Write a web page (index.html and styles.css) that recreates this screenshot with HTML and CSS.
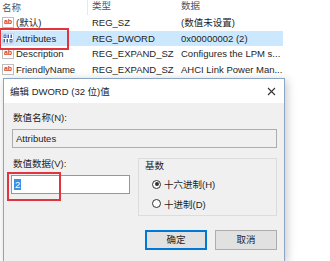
FILE: index.html
```html
<!DOCTYPE html>
<html>
<head>
    <meta charset="utf-8">
    <title>编辑 DWORD (32 位)值</title>
    <link rel="stylesheet" href="styles.css">
</head>
<body>
    <div class="list">
        <div class="row head">
            <span class="c1">名称</span>
            <span class="c2">类型</span>
            <span class="c3">数据</span>
        </div>
        <div class="row">
            <span class="c1"><i class="ico ab">ab</i>(默认)</span>
            <span class="c2">REG_SZ</span>
            <span class="c3">(数值未设置)</span>
        </div>
        <div class="row sel">
            <span class="c1 mark"><svg class="ico" width="12" height="11" viewBox="0 0 12 11"><rect x="0.5" y="0.5" width="11" height="10" fill="#fff" stroke="#b8c2d0" stroke-width="0.6"/><g fill="#3b62b8"><rect x="1.5" y="1.5" width="3" height="3.5"/><rect x="5.5" y="1.5" width="1.5" height="3.5"/><rect x="8.5" y="1.5" width="1.5" height="3.5"/><rect x="1.5" y="6" width="1.5" height="3.5"/><rect x="4.5" y="6" width="1.5" height="3.5"/><rect x="7.5" y="6" width="3" height="3.5"/></g><g fill="#fff"><rect x="2.5" y="2.5" width="1" height="1.5"/><rect x="8.5" y="7" width="1" height="1.5"/></g></svg>Attributes</span>
            <span class="c2">REG_DWORD</span>
            <span class="c3">0x00000002 (2)</span>
        </div>
        <div class="row">
            <span class="c1"><i class="ico ab">ab</i>Description</span>
            <span class="c2">REG_EXPAND_SZ</span>
            <span class="c3">Configures the LPM s...</span>
        </div>
        <div class="row">
            <span class="c1"><i class="ico ab">ab</i>FriendlyName</span>
            <span class="c2">REG_EXPAND_SZ</span>
            <span class="c3">AHCI Link Power Man...</span>
        </div>
    </div>

    <div class="dialog">
        <div class="title">
            <span>编辑 DWORD (32 位)值</span>
            <svg class="close" width="9" height="9" viewBox="0 0 9 9"><path d="M1 1L8 8M8 1L1 8" stroke="#333" stroke-width="1.1"/></svg>
        </div>
        <div class="body">
            <div class="label">数值名称(N):</div>
            <div class="field name">Attributes</div>
            <div class="pair">
                <div>
                    <div class="label">数值数据(V):</div>
                    <div class="valuebox">
                        <div class="field value"><span class="hl">2</span></div>
                    </div>
                </div>
                <div class="base">
                    <div class="legend">基数</div>
                    <label class="radio on"><i></i>十六进制(H)</label>
                    <label class="radio"><i></i>十进制(D)</label>
                </div>
            </div>
            <div class="btns">
                <a href="javascript:;" class="btn ok">确定</a>
                <a href="javascript:;" class="btn">取消</a>
            </div>
        </div>
    </div>
</body>
</html>
```
FILE: styles.css
```css
*{
    margin: 0;
    padding: 0;
    box-sizing: border-box;
}
body{
    width: 330px;
    height: 261px;
    overflow: hidden;
    background: #fff;
    font-family: "Liberation Sans", "Noto Sans CJK SC", sans-serif;
    font-size: 9.5px;
    color: #1e1e1e;
}
.row{
    display: grid;
    grid-template-columns: 88px 91px 1fr;
    height: 15.5px;
    line-height: 15.5px;
    white-space: nowrap;
    width: 283px;
}
.row.head{
    height: 15px;
    line-height: 12px;
    color: #4a5568;
}
.row.head .c1{
    border-right: 1px solid #e8e8e8;
    padding-left: 2px;
}
.row .c2{
    padding-left: 4px;
}
.row .c3{
    padding-left: 2px;
    overflow: hidden;
}
.row.sel{
    background: #cce8ff;
}
.c1{
    display: flex;
    align-items: center;
    padding-left: 2px;
}
.mark{
    position: relative;
}
.mark:after{
    content: "";
    position: absolute;
    left: -1px;
    top: -3px;
    width: 66px;
    height: 18px;
    border: 2px solid #e0343e;
}
.ico{
    flex: none;
    margin-right: 2px;
}
.ab{
    display: inline-block;
    width: 12px;
    height: 11px;
    border: 1px solid #bdbdbd;
    background: #fff;
    color: #d23c3c;
    font-style: normal;
    font-size: 7px;
    line-height: 8px;
    text-align: center;
    font-weight: bold;
}

.dialog{
    margin: 1px 0 0 3px;
    width: 282px;
    height: 183px;
    border: 1px solid #8aa6c4;
    border-bottom: none;
    background: #f0f0f0;
    box-shadow: 2px 2px 9px rgba(0,0,0,.22);
}
.title{
    display: flex;
    justify-content: space-between;
    align-items: center;
    height: 24px;
    padding: 0 8px 0 6px;
    background: #fff;
}
.body{
    padding: 9px 7px 0 8px;
}
.label{
    height: 12px;
    line-height: 12px;
    padding-left: 1px;
}
.field{
    height: 19px;
    line-height: 17px;
    border: 1px solid #adadad;
    background: #f0f0f0;
    padding-left: 3px;
}
.name{
    width: 265px;
    margin: 5px 0 10px;
}
.pair{
    display: grid;
    grid-template-columns: 126px 139px;
}
.valuebox{
    margin: 5px 0 0 -1px;
    width: 119px;
    position: relative;
}
.value{
    background: #fff;
    border-color: #7f9db6;
    padding-left: 2px;
}
.valuebox:after{
    content: "";
    position: absolute;
    left: -4px;
    top: -3px;
    width: 50px;
    height: 25px;
    border: 2px solid #e0343e;
}
.hl{
    background: #3b8fe4;
    color: #fff;
    padding: 0 1px;
}
.base{
    border: 1px solid #dcdcdc;
    height: 58px;
    padding: 1px 0 0 13px;
}
.base .legend{
    height: 14px;
    line-height: 12px;
    margin-left: -7px;
}
.radio{
    display: flex;
    align-items: center;
    height: 19.5px;
    padding-top: 1px;
}
.radio i{
    width: 9px;
    height: 9px;
    border: 1px solid #333;
    border-radius: 50%;
    background: #fff;
    margin-right: 3px;
    display: inline-block;
    position: relative;
}
.radio.on i:after{
    content: "";
    position: absolute;
    left: 1.5px;
    top: 1.5px;
    width: 4px;
    height: 4px;
    border-radius: 50%;
    background: #333;
}
.btns{
    display: flex;
    justify-content: flex-end;
    gap: 8px;
    margin-top: 14px;
}
.btn{
    width: 62px;
    height: 20px;
    line-height: 18px;
    text-align: center;
    text-decoration: none;
    color: #1e1e1e;
    background: #e1e1e1;
    border: 1px solid #adadad;
}
.btn.ok{
    border: 2px solid #0078d7;
    line-height: 16px;
}
```
